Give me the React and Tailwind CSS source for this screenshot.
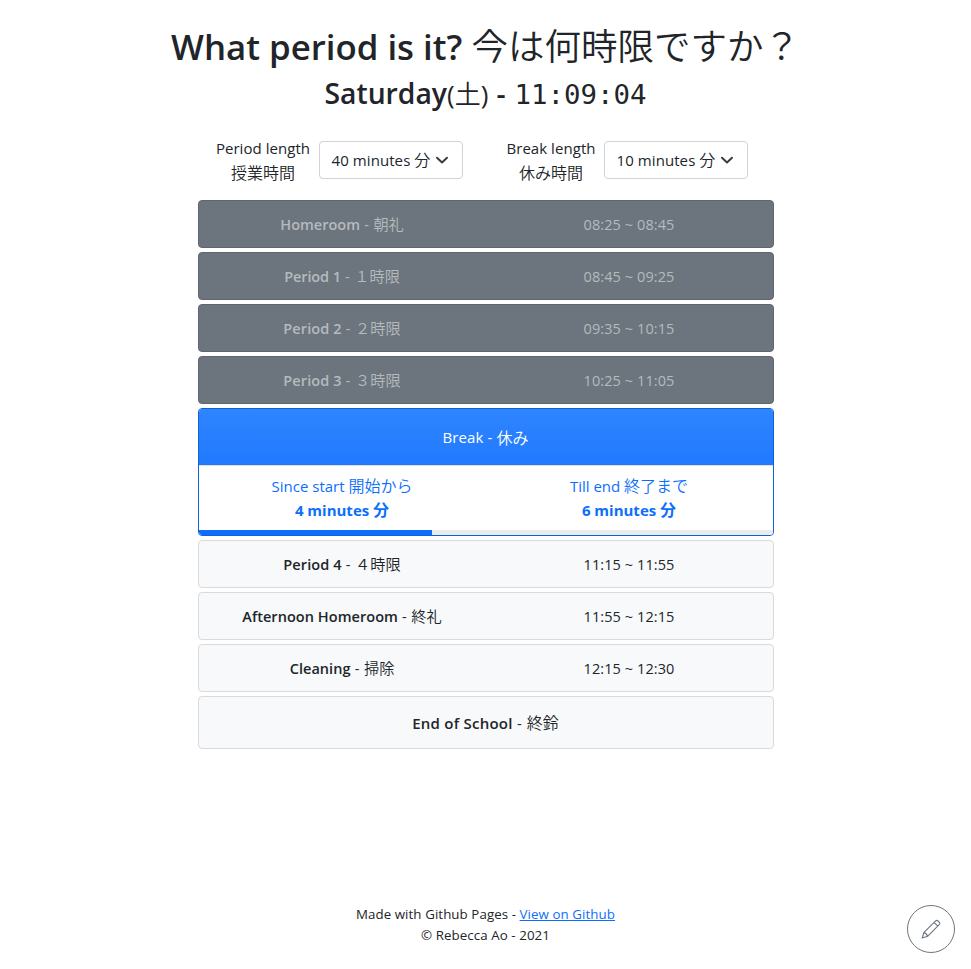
import React from 'react';

const past = [
  ['Homeroom', '朝礼', '08:25 ~ 08:45', 'tracking-[0px]'],
  ['Period 1', '１時限', '08:45 ~ 09:25', 'tracking-[-0.1px]'],
  ['Period 2', '２時限', '09:35 ~ 10:15', 'tracking-[0.1px]'],
  ['Period 3', '３時限', '10:25 ~ 11:05', 'tracking-[0.1px]'],
];

const upcoming = [
  ['Period 4', '４時限', '11:15 ~ 11:55', 'tracking-[0.1px]'],
  ['Afternoon Homeroom', '終礼', '11:55 ~ 12:15', 'tracking-[0.05px]'],
  ['Cleaning', '掃除', '12:15 ~ 12:30', 'tracking-[0.05px]'],
];

function Ja({ children, className = 'text-[15.2px]' }) {
  return (
    <span lang="ja" className={`font-['Noto_Sans_CJK_JP',sans-serif] font-[350] tracking-normal ${className}`}>
      {children}
    </span>
  );
}

function Row({ item, done }) {
  const [name, ja, time, tracking] = item;
  const tone = done
    ? 'bg-[#6c757d] border-[#5f676e] text-[#b5babe]'
    : 'bg-[#f8f9fa] border-[#d9dadb] text-[#212529]';
  return (
    <div className={`flex h-12 items-center rounded border text-center text-[14.5px] leading-6 ${tone}`}>
      <div className="flex-1 whitespace-nowrap">
        <span className={`font-[570] ${tracking}`}>{name}</span>
        <span className="tracking-[0.4px]"> - </span>
        <Ja>{ja}</Ja>
      </div>
      <div className="flex-1 pt-px whitespace-nowrap tracking-[0.08px]">{time}</div>
    </div>
  );
}

function Picker({ label, ja, value, labelWidth }) {
  return (
    <div className="flex items-center gap-2">
      <div className={`${labelWidth} -mt-px whitespace-nowrap text-center text-[15px] leading-6`}>
        <div className="flex h-6 items-center justify-center pt-px tracking-[0.05px]">{label}</div>
        <div className="flex h-6 items-center justify-center">
          <Ja className="text-base leading-6">{ja}</Ja>
        </div>
      </div>
      <button className="flex h-[38px] w-36 items-center rounded border border-[#ced4da] bg-white pl-3 text-[15px] whitespace-nowrap">
        <span className="-mt-0.5 w-[99px] text-left leading-6 tracking-[0.08px]">
          {value} minutes <Ja className="text-base leading-6">分</Ja>
        </span>
        <svg className="ml-[3px] h-3 w-4" viewBox="0 0 16 12" fill="none" stroke="#343a40" strokeWidth="1.9" strokeLinecap="round" strokeLinejoin="round">
          <path d="M3 3.7l5 4.8 5-4.8" />
        </svg>
      </button>
    </div>
  );
}

export default function App() {
  return (
    <div className="flex h-[969px] w-full flex-col items-center overflow-hidden bg-white font-['Open_Sans','Noto_Sans_CJK_JP',sans-serif] text-[#212529]">
      <h1 className="mt-[23px] h-11 whitespace-nowrap text-[34.8px] leading-[44px] font-[560]">
        What period is it? <Ja className="text-[36.5px] leading-[44px]">今は何時限ですか？</Ja>
      </h1>
      <h2 className="mt-2 h-[37px] whitespace-nowrap text-[28.3px] leading-9 font-[560]">
        Saturday
        <span className="text-[26px] font-normal">(</span>
        <Ja className="text-[26px] leading-9">土</Ja>
        <span className="text-[26px] font-normal">)</span>
        <span className="tracking-[0.8px]"> - </span>
        <span className="font-['DejaVu_Sans_Mono',monospace] text-[27.4px] font-normal">11:09:04</span>
      </h2>

      <div className="mt-6 flex h-12 w-[576px] gap-11 pl-[18px]">
        <Picker label="Period length" ja="授業時間" value="40" labelWidth="w-[95px]" />
        <Picker label="Break length" ja="休み時間" value="10" labelWidth="w-[89px]" />
      </div>

      <main className="mt-4 flex w-[576px] flex-col gap-1">
        {past.map((item) => (
          <Row key={item[0]} item={item} done />
        ))}

        <section className="flex h-32 flex-col overflow-hidden rounded border border-[#0b62d9] bg-white text-[15px] leading-6">
          <div className="flex h-[57px] items-center justify-center border-b border-[#dfdfdf] bg-linear-to-b from-[#2f85ff] to-[#2079ff] pb-px text-white">
            <span className="whitespace-pre font-medium tracking-[0.1px]">Break - </span>
            <Ja className="text-base leading-6">休み</Ja>
          </div>
          <div className="flex h-16 pt-[7px] pb-[9px] text-center text-[#0d6efd]">
            <div className="flex-1">
              <div className="h-6">
                Since start <Ja className="text-base leading-6">開始から</Ja>
              </div>
              <div className="h-6 pt-px font-bold">
                4 minutes <span className="text-base font-bold">分</span>
              </div>
            </div>
            <div className="flex-1">
              <div className="h-6">
                Till end <Ja className="text-base leading-6">終了まで</Ja>
              </div>
              <div className="h-6 pt-px font-bold">
                6 minutes <span className="text-base font-bold">分</span>
              </div>
            </div>
          </div>
          <div className="h-[5px] bg-[#e9ecef]">
            <div className="h-full w-[233px] bg-[#0d6efd]" />
          </div>
        </section>

        {upcoming.map((item) => (
          <Row key={item[0]} item={item} />
        ))}

        <div className="flex h-[53px] items-center justify-center rounded border border-[#d9dadb] bg-[#f8f9fa] text-[15px] leading-6">
          <span className="whitespace-pre font-[570] tracking-[0.25px]">End of School</span>
          <span className="whitespace-pre tracking-[0.5px]"> - </span>
          <Ja className="-mt-px text-base leading-6">終鈴</Ja>
        </div>
      </main>

      <footer className="mt-auto mb-[23px] text-center text-[13.3px] leading-[21px] tracking-[0.08px]">
        <p>
          Made with Github Pages -{' '}
          <a href="#github" className="text-[#0d6efd] underline">View on Github</a>
        </p>
        <p>© Rebecca Ao - 2021</p>
      </footer>

      <button aria-label="Edit" className="fixed right-4 bottom-4 flex h-12 w-12 items-center justify-center rounded-full border border-[#6c757d] bg-white">
        <svg className="h-5 w-5" viewBox="0 0 20 20" fill="none" stroke="#6c757d" strokeWidth="1.1" strokeLinejoin="round">
          <path d="M1.2 19l1.6-5.4L14.6 1.8q1.2-1 2.4.2l1.2 1.2q1.2 1.2 0 2.4L6.6 17.3zM2.8 13.6q2.6.4 3.8 3.7M13 3.4l3.8 3.8" />
        </svg>
      </button>
    </div>
  );
}
